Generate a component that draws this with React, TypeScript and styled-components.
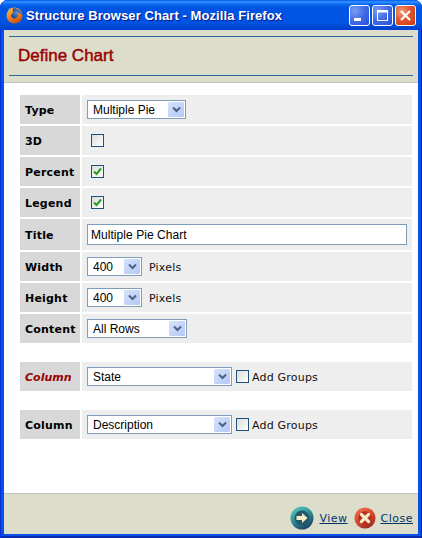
import React from "react";
import styled, { createGlobalStyle } from "styled-components";

const Global = createGlobalStyle`
  html, body { margin: 0; padding: 0; background: #fff; }
  * { box-sizing: border-box; }
`;

const Win = styled.div`
  width: 422px;
  height: 538px;
  display: flex;
  flex-direction: column;
  overflow: hidden;
  border-radius: 8px 8px 0 0;
  background: #0553e6;
  box-shadow: inset 1px 0 0 #0831d9, inset -1px 0 0 #001ea0, inset 0 -2px 0 #0a2ab0;
`;

const TitleBar = styled.div`
  height: 30px;
  flex: none;
  display: flex;
  align-items: center;
  padding: 0 6px 0 6px;
  background: linear-gradient(to bottom, #0058ee 0, #3593ff 2px, #0a6af0 4px, #0054e3 8px, #0055e5 22px, #0048d0 27px, #003dd7 30px);
`;

const AppIcon = styled.svg`
  width: 17px;
  height: 17px;
  flex: none;
  margin-right: 3px;
`;

const TitleText = styled.div`
  flex: 1;
  font: bold 13px "Liberation Sans", Arial, sans-serif;
  letter-spacing: 0.08px;
  color: #fff;
  text-shadow: 1px 1px 1px #0f1089;
  white-space: nowrap;
`;

const WinButtons = styled.div`
  display: flex;
  gap: 2px;
`;

const WinButton = styled.div<{ $close?: boolean }>`
  width: 21px;
  height: 21px;
  border: 1px solid #fff;
  border-radius: 3px;
  display: flex;
  align-items: center;
  justify-content: center;
  background: ${(p) =>
    p.$close
      ? "radial-gradient(circle at 30% 30%, #f0a080 0, #e2552e 45%, #c43a12 100%)"
      : "radial-gradient(circle at 25% 25%, #7e9cf0 0, #3f6be6 50%, #2a50d8 100%)"};
`;

const Frame = styled.div`
  flex: 1;
  margin: 0 4px 4px;
  display: flex;
  flex-direction: column;
  min-height: 0;
  background: #fff;
`;

const Header = styled.div`
  height: 53px;
  flex: none;
  padding: 6px 5px 6px;
  background: #ddddcc;
  border-bottom: 1px solid #c4c4c0;
`;

const HeaderInner = styled.div`
  height: 100%;
  display: flex;
  align-items: center;
  padding-left: 9px;
  border-top: 1px solid #336699;
  border-bottom: 1px solid #336699;
`;

const Heading = styled.h1`
  margin: 0;
  font: normal 17px "Liberation Sans", Arial, sans-serif;
  -webkit-text-stroke: 0.45px #990000;
  color: #990000;
`;

const Body = styled.div`
  flex: 1;
  min-height: 0;
  padding: 12px 6px 0 16px;
`;

const Group = styled.div<{ $gap?: number }>`
  display: flex;
  flex-direction: column;
  gap: 2px;
  margin-bottom: ${(p) => p.$gap ?? 0}px;
`;

const Row = styled.div<{ $h?: number }>`
  display: grid;
  grid-template-columns: 60px 1fr;
  column-gap: 2px;
  height: ${(p) => p.$h ?? 29}px;
`;

const Label = styled.div<{ $required?: boolean }>`
  display: flex;
  align-items: center;
  padding: 1px 0 0 5px;
  background: #d8d8d8;
  font: bold 11px "DejaVu Sans", Verdana, sans-serif;
  font-style: ${(p) => (p.$required ? "italic" : "normal")};
  letter-spacing: ${(p) => (p.$required ? "0" : "0.2px")};
  color: ${(p) => (p.$required ? "#990000" : "#000")};
`;

const Value = styled.div`
  display: flex;
  align-items: center;
  padding-left: 5px;
  background: #eeeeee;
`;

const SelectBox = styled.div<{ $w: number }>`
  position: relative;
  width: ${(p) => p.$w}px;
  height: 19px;
  flex: none;
`;

const NativeSelect = styled.select`
  display: block;
  width: 100%;
  height: 100%;
  appearance: none;
  border: 1px solid #7f9db9;
  border-radius: 0;
  background: #fff;
  padding: 0 0 0 5px;
  font: 12px "Liberation Sans", Arial, sans-serif;
  color: #000;
  outline: none;
`;

const Arrow = styled.span`
  position: absolute;
  top: 2px;
  right: 2px;
  width: 16px;
  height: 15px;
  border-radius: 1px;
  background: linear-gradient(135deg, #d6e2fb, #b4c8f6);
  display: flex;
  align-items: center;
  justify-content: center;
  pointer-events: none;
`;

const TextInput = styled.input`
  width: 320px;
  height: 21px;
  border: 1px solid #7f9db9;
  border-radius: 0;
  background: #fff;
  padding: 0 3px;
  font: 12px "Liberation Sans", Arial, sans-serif;
  letter-spacing: 0.05px;
  color: #000;
  outline: none;
`;

const Box = styled.span<{ $ml: number }>`
  width: 13px;
  height: 13px;
  margin-left: ${(p) => p.$ml}px;
  flex: none;
  border: 1px solid #1c5180;
  background: linear-gradient(135deg, #dcdcd7, #ffffff);
  display: flex;
  align-items: center;
  justify-content: center;
`;

const Hint = styled.span<{ $ml: number }>`
  margin-left: ${(p) => p.$ml}px;
  padding-top: 2px;
  font: 11px "DejaVu Sans", Verdana, sans-serif;
  letter-spacing: 0.2px;
  color: #111;
  white-space: nowrap;
`;

const Footer = styled.div`
  height: 41px;
  flex: none;
  display: flex;
  align-items: center;
  justify-content: flex-end;
  padding: 7px 5px 0 0;
  background: #ddddcc;
  border-top: 1px solid #c4c4c0;
`;

const FootIcon = styled.svg<{ $ml: number; $size: number }>`
  width: ${(p) => p.$size}px;
  height: ${(p) => p.$size}px;
  flex: none;
  margin-left: ${(p) => p.$ml}px;
`;

const FootLink = styled.a`
  margin: 2px 0 0 5px;
  font: 11px "DejaVu Sans", Verdana, sans-serif;
  letter-spacing: 0.5px;
  color: #003366;
  text-decoration: underline;
`;

const Chevron = () => (
  <svg width="9" height="7" viewBox="0 0 9 7">
    <path d="M1 1.5 L4.5 5 L8 1.5" fill="none" stroke="#4d6185" strokeWidth="2" />
  </svg>
);

const Check = () => (
  <svg width="9" height="9" viewBox="0 0 9 9">
    <path d="M1 4.5 L3.5 7 L8 1.5" fill="none" stroke="#21a121" strokeWidth="2" />
  </svg>
);

const Drop = ({ w, value }: { w: number; value: string }) => (
  <SelectBox $w={w}>
    <NativeSelect defaultValue={value}>
      <option>{value}</option>
    </NativeSelect>
    <Arrow>
      <Chevron />
    </Arrow>
  </SelectBox>
);

export default function App() {
  return (
    <>
      <Global />
      <Win>
        <TitleBar>
          <AppIcon viewBox="0 0 17 17">
            <defs>
              <radialGradient id="globe" cx="0.55" cy="0.45" r="0.6">
                <stop offset="0" stopColor="#5f90d4" />
                <stop offset="1" stopColor="#1c3f8f" />
              </radialGradient>
              <linearGradient id="fox" x1="0.2" y1="0" x2="0.6" y2="1">
                <stop offset="0" stopColor="#f6c040" />
                <stop offset="0.6" stopColor="#ea7d1a" />
                <stop offset="1" stopColor="#c84d12" />
              </linearGradient>
            </defs>
            <circle cx="8.5" cy="8.5" r="8" fill="url(#fox)" />
            <path d="M7 1.5 C10.5 0.6 15 3 15.8 7.5 C14 6 12.6 6 11.5 6.3 C12.6 8 12 10.5 9.5 11.3 C7.5 12 5.5 10.8 5.2 9 C5 7.4 6.2 6.2 7.4 6 C6.7 4.5 6.4 3 7 1.5 Z" fill="url(#globe)" />
            <path d="M3 0.5 C2.6 2.5 3 3.5 3.6 4.6 L5.4 3.6 C4.4 3 3.6 2 3 0.5 Z" fill="#f2a42e" />
          </AppIcon>
          <TitleText>Structure Browser Chart - Mozilla Firefox</TitleText>
          <WinButtons>
            <WinButton>
              <svg width="13" height="13" viewBox="0 0 13 13">
                <rect x="1" y="9" width="7" height="3" fill="#fff" />
              </svg>
            </WinButton>
            <WinButton>
              <svg width="13" height="13" viewBox="0 0 13 13">
                <path d="M1 1 H12 V12 H1 Z M2 3.5 V11 H11 V3.5 Z" fill="#fff" fillRule="evenodd" />
              </svg>
            </WinButton>
            <WinButton $close>
              <svg width="13" height="13" viewBox="0 0 13 13">
                <path d="M2 2 L11 11 M11 2 L2 11" stroke="#fff" strokeWidth="2.2" />
              </svg>
            </WinButton>
          </WinButtons>
        </TitleBar>
        <Frame>
          <Header>
            <HeaderInner>
              <Heading>Define Chart</Heading>
            </HeaderInner>
          </Header>
          <Body>
            <Group $gap={19}>
              <Row>
                <Label>Type</Label>
                <Value><Drop w={99} value="Multiple Pie" /></Value>
              </Row>
              <Row>
                <Label>3D</Label>
                <Value><Box $ml={4} /></Value>
              </Row>
              <Row>
                <Label>Percent</Label>
                <Value><Box $ml={4}><Check /></Box></Value>
              </Row>
              <Row>
                <Label>Legend</Label>
                <Value><Box $ml={4}><Check /></Box></Value>
              </Row>
              <Row $h={31}>
                <Label>Title</Label>
                <Value><TextInput defaultValue="Multiple Pie Chart" /></Value>
              </Row>
              <Row>
                <Label>Width</Label>
                <Value><Drop w={55} value="400" /><Hint $ml={7}>Pixels</Hint></Value>
              </Row>
              <Row>
                <Label>Height</Label>
                <Value><Drop w={55} value="400" /><Hint $ml={7}>Pixels</Hint></Value>
              </Row>
              <Row>
                <Label>Content</Label>
                <Value><Drop w={100} value="All Rows" /></Value>
              </Row>
            </Group>
            <Group $gap={19}>
              <Row>
                <Label $required>Column</Label>
                <Value><Drop w={145} value="State" /><Box $ml={4} /><Hint $ml={3}>Add Groups</Hint></Value>
              </Row>
            </Group>
            <Group>
              <Row>
                <Label>Column</Label>
                <Value><Drop w={145} value="Description" /><Box $ml={4} /><Hint $ml={3}>Add Groups</Hint></Value>
              </Row>
            </Group>
          </Body>
          <Footer>
            <FootIcon $ml={0} $size={24} viewBox="0 0 24 24">
              <defs>
                <linearGradient id="teal" x1="0.2" y1="0.1" x2="0.7" y2="1">
                  <stop offset="0" stopColor="#4fc0b8" />
                  <stop offset="0.55" stopColor="#2a7f8a" />
                  <stop offset="1" stopColor="#1f3f66" />
                </linearGradient>
                <linearGradient id="red" x1="0.2" y1="0.1" x2="0.7" y2="1">
                  <stop offset="0" stopColor="#f0674a" />
                  <stop offset="0.6" stopColor="#cf4128" />
                  <stop offset="1" stopColor="#8d2b1e" />
                </linearGradient>
              </defs>
              <circle cx="12" cy="12" r="11.5" fill="url(#teal)" />
              <circle cx="12" cy="12" r="7.5" fill="#24586e" />
              <path d="M6.5 10 H12 V7 L17.5 12 L12 17 V14 H6.5 Z" fill="#f6edc8" />
            </FootIcon>
            <FootLink>View</FootLink>
            <FootIcon $ml={6} $size={22} viewBox="0 0 24 24">
              <circle cx="12" cy="12" r="11.5" fill="url(#red)" />
              <circle cx="12" cy="12" r="7.5" fill="#b5321f" />
              <path d="M8 8 L16 16 M16 8 L8 16" stroke="#f8ecc8" strokeWidth="3.4" strokeLinecap="round" />
            </FootIcon>
            <FootLink>Close</FootLink>
          </Footer>
        </Frame>
      </Win>
    </>
  );
}
